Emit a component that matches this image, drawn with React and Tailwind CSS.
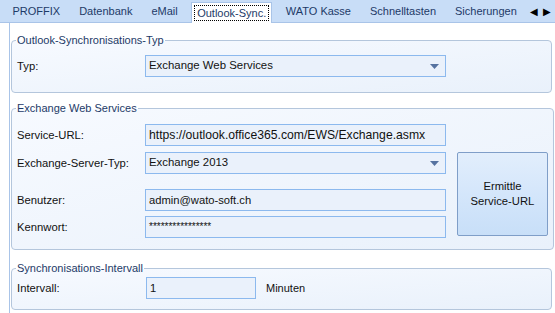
import React from "react";

const tabs = ["PROFFIX", "Datenbank", "eMail", "Outlook-Sync.", "WATO Kasse", "Schnelltasten", "Sicherungen"];

function Group({ title, className, children }) {
  return (
    <fieldset
      className={`rounded-[4px] border border-[#b4c6dc] bg-gradient-to-br from-[#f7faff] to-[#e9f1fb] px-[5px] ${className}`}
    >
      <legend className="-ml-[1px] px-[1px] text-[11px] leading-[15px] text-[#1d3a67]">{title}</legend>
      {children}
    </fieldset>
  );
}

function Field({ children, className = "" }) {
  return (
    <div
      className={`flex h-[22px] items-center whitespace-nowrap border border-[#8cb9ee] bg-[#eaf1fb] px-[3px] text-[#111] ${className}`}
    >
      {children}
    </div>
  );
}

function Select({ value }) {
  return (
    <Field className="w-[301px] justify-between pr-[6px] text-[11.4px]">
      <span>{value}</span>
      <svg width="9" height="5" viewBox="0 0 9 5">
        <path d="M0 0h9L4.5 5z" fill="#5672a0" />
      </svg>
    </Field>
  );
}

function Row({ label, children, className = "" }) {
  return (
    <div className={`flex items-center ${className}`}>
      <span className="w-[128px] shrink-0 text-[11.25px] text-[#111]">{label}</span>
      {children}
    </div>
  );
}

export default function App() {
  return (
    <div
      className="h-[313px] w-[555px] overflow-hidden bg-white text-[12px]"
      style={{ fontFamily: '"Liberation Sans", Arial, sans-serif' }}
    >
      <div className="flex h-[23px] items-end border-b border-[#a9c4e8] bg-[#c8ddf7] pl-[3px] text-[11px]">
        {tabs.map((t) =>
          t === "Outlook-Sync." ? (
            <div
              key={t}
              className="-mb-px ml-[4px] mr-[4px] flex h-[21px] shrink-0 items-center whitespace-nowrap border border-b-0 border-[#a9c4e8] bg-white px-[2px]"
            >
              <span className="border border-dotted border-black px-[2px] leading-[14px] text-[#1d3a67]">{t}</span>
            </div>
          ) : (
            <div key={t} className="flex h-[21px] shrink-0 items-center whitespace-nowrap px-[9.5px] text-[#1d3a67]">
              {t}
            </div>
          )
        )}
        <div className="ml-auto flex h-[21px] items-center gap-[5px] pr-[4px] text-[10px] text-black">
          <span>◀</span>
          <span>▶</span>
        </div>
      </div>

      <div className="ml-[9px] flex h-[290px] flex-col border-l border-[#a9c4e8] pl-[1px] pr-[3px]">
        <Group title="Outlook-Synchronisations-Typ" className="mt-[10px] h-[60px]">
          <Row label="Typ:" className="mt-[7px]">
            <Select value="Exchange Web Services" />
          </Row>
        </Group>

        <Group title="Exchange Web Services" className="mt-[8px] h-[149px]">
          <div className="mt-[8px] flex">
            <div className="flex flex-col">
              <Row label="Service-URL:">
                <Field className="w-[301px] text-[12.2px]">https://outlook.office365.com/EWS/Exchange.asmx</Field>
              </Row>
              <Row label="Exchange-Server-Typ:" className="mt-[6px]">
                <Select value="Exchange 2013" />
              </Row>
              <Row label="Benutzer:" className="mt-[15px]">
                <Field className="w-[301px] text-[11.2px]">admin@wato-soft.ch</Field>
              </Row>
              <Row label="Kennwort:" className="mt-[5px]">
                <Field className="w-[301px] text-[10px] leading-none">****************</Field>
              </Row>
            </div>
            <div className="ml-[11px] mt-[28px] flex h-[84px] w-[91px] items-center justify-center rounded-[2px] border border-[#7f9ec8] bg-gradient-to-b from-[#e2eefc] via-[#d4e6fb] to-[#c8dff8] text-center text-[11.25px] leading-[15px] text-[#111]">
              Ermittle
              <br />
              Service-URL
            </div>
          </div>
        </Group>

        <Group title="Synchronisations-Intervall" className="mt-[11px] h-[49px]">
          <div className="mt-[1px] flex items-center">
            <span className="w-[129px] shrink-0 text-[11.25px] text-[#111]">Intervall:</span>
            <Field className="w-[110px] text-[11.2px]">1</Field>
            <span className="ml-[10px] text-[11px] text-[#111]">Minuten</span>
          </div>
        </Group>
      </div>
    </div>
  );
}
